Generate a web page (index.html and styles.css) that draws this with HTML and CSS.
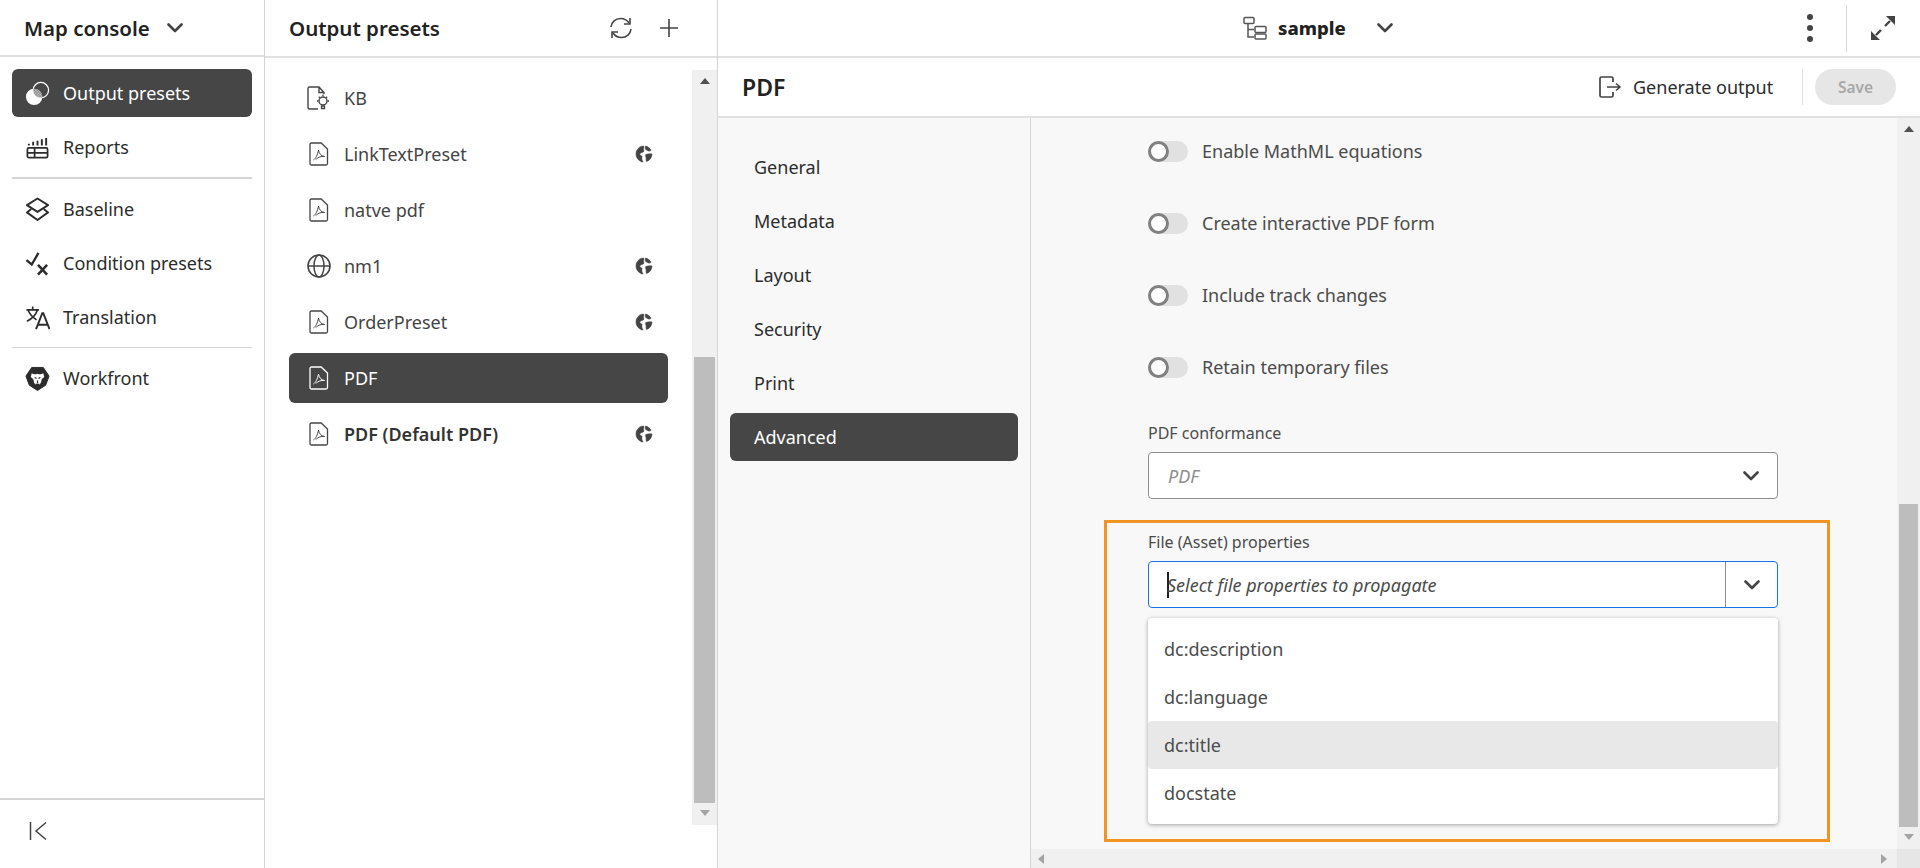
FILE: index.html
```html
<!DOCTYPE html>
<html lang="en">
<head>
  <meta charset="UTF-8" />
  <title>Map console - Output presets</title>
  <link rel="stylesheet" href="styles.css">
</head>
<body>
  <svg class="sprites" width="0" height="0">
    <defs>
      <pattern id="dither" width="3" height="3" patternUnits="userSpaceOnUse">
        <rect width="1.500" height="1.500" fill="#464646"/>
        <rect x="1.500" y="1.500" width="1.500" height="1.500" fill="#464646"/>
      </pattern>
      <clipPath id="ring-clip"><circle cx="16.500" cy="9.500" r="8"/></clipPath>
    </defs>
    <symbol id="i-pdf" viewBox="0 0 24 24">
      <path d="M4.500 1h9.700L20.500 7V21.500a1.500 1.500 0 0 1-1.500 1.500H4.500A1.500 1.500 0 0 1 3 21.500V2.500A1.500 1.500 0 0 1 4.500 1z" fill="none" stroke="currentColor" stroke-width="1.300"/>
      <path d="M6.500 18c2-1.500 4-4.500 5-10 .5 3.500 2.500 6 6 6.500-3.300-.4-7 .7-8.500 3" fill="none" stroke="currentColor" stroke-width="1"/>
    </symbol>
    <symbol id="i-world" viewBox="0 0 18 18">
      <path d="M8.500 1C4.200 1.300 1 4.800 1 9c0 3 1.600 5.600 4 7 1.200.7 2 1 3 1-1-2-1.500-3.500-1-5 .2-1-1-1.500-2-2-.6-1 .2-2 1.500-2.300 1.800-.3 2.800-1.300 2.300-2.700-.3-1-.6-1.500.3-3z" fill="currentColor" stroke="currentColor" stroke-width=".6"/>
      <path d="M10.500 1.100c2.500.5 4.500 2 5.600 4.200-1 .8-2.200 1-3.200.4-1.200-.8-2.400-1-2.700-2.200-.1-.8.5-1.500.3-2.400z" fill="currentColor" stroke="currentColor" stroke-width=".6"/>
      <path d="M10.800 9.500c2-.7 4.300-.8 6.200-.5 0 3.500-2.300 6.500-5.500 7.600-.6-1-.4-2.300-.4-3.300 0-1.300-.9-2.400-.3-3.800z" fill="currentColor" stroke="currentColor" stroke-width=".6"/>
    </symbol>
    <symbol id="i-chev" viewBox="0 0 16 10">
      <path d="M1.500 1.500L8 8l6.500-6.500" fill="none" stroke="currentColor" stroke-width="2.600" stroke-linecap="round" stroke-linejoin="round"/>
    </symbol>
  </svg>

  <aside class="sidebar">
    <div class="side-head">
      <span class="side-title">Map console</span>
      <svg class="chev"><use href="#i-chev"/></svg>
    </div>
    <nav class="side-nav">
      <a class="side-item active">
        <svg class="side-icon" viewBox="0 0 26 26">
          <circle cx="16.500" cy="9.500" r="8" fill="none" stroke="currentColor" stroke-width="1.300"/>
          <circle cx="9.500" cy="16.500" r="8.500" fill="currentColor"/>
          <circle cx="9.500" cy="16.500" r="8.500" fill="url(#dither)" clip-path="url(#ring-clip)"/>
        </svg>
        Output presets
      </a>
      <a class="side-item">
        <svg class="side-icon" viewBox="0 0 26 26">
          <path d="M4 9v2M8.500 7v4M13 6v5M17.500 4.500V11M22 3v8" fill="none" stroke="currentColor" stroke-width="2"/>
          <rect x="2.500" y="13.500" width="21" height="10" rx="1.500" fill="none" stroke="currentColor" stroke-width="1.800"/>
          <path d="M2.500 18.500h21M10 13.500v10" fill="none" stroke="currentColor" stroke-width="1.800"/>
        </svg>
        Reports
      </a>
      <hr class="side-rule">
      <a class="side-item">
        <svg class="side-icon" viewBox="0 0 26 26">
          <path d="M13 1.500L24 8.500 13 15.500 2 8.500z" fill="none" stroke="currentColor" stroke-width="2" stroke-linejoin="round"/>
          <path d="M6.500 12.500L2 16 13 24 24 16l-4.500-3.500" fill="none" stroke="currentColor" stroke-width="2" stroke-linejoin="round"/>
        </svg>
        Baseline
      </a>
      <a class="side-item">
        <svg class="side-icon" viewBox="0 0 26 26">
          <path d="M1.500 9.500L7 14 14 2" fill="none" stroke="currentColor" stroke-width="2.400"/>
          <path d="M13.500 14.500l9.500 10M23 14.500l-9.500 10" fill="none" stroke="currentColor" stroke-width="2.600"/>
        </svg>
        Condition presets
      </a>
      <a class="side-item">
        <svg class="side-icon" viewBox="0 0 26 26">
          <path d="M1.500 5h13M8 1.500V5M3 5c2 5 5 8 9 10.500M13 5c-1.500 5-5 9-11 12" fill="none" stroke="currentColor" stroke-width="1.700"/>
          <path d="M11.500 25L18 8.500h1L25.500 25M14 20.500h9" fill="none" stroke="currentColor" stroke-width="2"/>
        </svg>
        Translation
      </a>
      <hr class="side-rule thin">
      <a class="side-item">
        <svg class="side-icon" viewBox="0 0 26 26">
          <path d="M7 1.500h12l6 9-3.500 9.500L13 25.500 4.500 20 1 10.500z" fill="currentColor" stroke="currentColor" stroke-linejoin="round"/>
          <path d="M7 7.500c2 1.500 4 1.500 6 .5 2 1 4 1 6-.5l1 4-2.500 2-1 4-1.500 2h-4l-1.500-2-1-4L6 11.500z" fill="#fff"/>
          <path d="M10 12l2 .8M16 12l-2 .8M13 15v3M11 19h4" stroke="currentColor" stroke-width="1.300" fill="none"/>
        </svg>
        Workfront
      </a>
    </nav>
    <div class="side-foot">
      <svg class="collapse" viewBox="0 0 18 20"><path d="M1.500 1v18M17 1.500L7 10l10 8.500" fill="none" stroke="currentColor" stroke-width="1.500"/></svg>
    </div>
  </aside>

  <section class="presets">
    <div class="presets-head">
      <span class="presets-title">Output presets</span>
      <div class="head-tools">
        <svg class="tool" viewBox="0 0 24 22">
          <path d="M2 10C2.500 5 6.500 1.500 11.500 1.500c3.500 0 6.500 1.500 8.500 4.500M22 12c-.5 5-4.500 8.500-9.500 8.500-3.500 0-6.500-1.500-8.500-4.500" fill="none" stroke="currentColor" stroke-width="1.600"/>
          <path d="M21 1v6h-6M3 21v-6h6" fill="none" stroke="currentColor" stroke-width="1.600"/>
        </svg>
        <svg class="tool plus" viewBox="0 0 20 20"><path d="M10 1v18M1 10h18" fill="none" stroke="currentColor" stroke-width="1.600"/></svg>
      </div>
    </div>
    <div class="presets-body">
      <ul class="preset-list">
        <li class="preset">
          <svg class="preset-icon" viewBox="0 0 24 24">
            <path d="M11 23H2.500A1.500 1.500 0 0 1 1 21.500V2.500A1.500 1.500 0 0 1 2.500 1H12l5 5.500V8M12 1v5.500h5" fill="none" stroke="currentColor" stroke-width="1.400"/>
            <circle cx="16" cy="15" r="4" fill="none" stroke="currentColor" stroke-width="1.400"/>
            <path d="M14.500 20h3v2.500h-3zM16 8.500v1.500M10 15h1.500M20.500 15H22M11.800 10.800l1 1M20.200 10.800l-1 1" fill="none" stroke="currentColor" stroke-width="1.300"/>
          </svg>
          <span class="preset-name">KB</span>
        </li>
        <li class="preset">
          <svg class="preset-icon"><use href="#i-pdf"/></svg>
          <span class="preset-name">LinkTextPreset</span>
          <svg class="world"><use href="#i-world"/></svg>
        </li>
        <li class="preset">
          <svg class="preset-icon"><use href="#i-pdf"/></svg>
          <span class="preset-name">natve pdf</span>
        </li>
        <li class="preset">
          <svg class="preset-icon" viewBox="0 0 24 24">
            <circle cx="12" cy="12" r="11" fill="none" stroke="currentColor" stroke-width="1.600"/>
            <ellipse cx="12" cy="12" rx="5" ry="11" fill="none" stroke="currentColor" stroke-width="1.500"/>
            <path d="M1 12h22" stroke="currentColor" stroke-width="1.500"/>
          </svg>
          <span class="preset-name">nm1</span>
          <svg class="world"><use href="#i-world"/></svg>
        </li>
        <li class="preset">
          <svg class="preset-icon"><use href="#i-pdf"/></svg>
          <span class="preset-name">OrderPreset</span>
          <svg class="world"><use href="#i-world"/></svg>
        </li>
        <li class="preset active">
          <svg class="preset-icon"><use href="#i-pdf"/></svg>
          <span class="preset-name">PDF</span>
        </li>
        <li class="preset">
          <svg class="preset-icon"><use href="#i-pdf"/></svg>
          <span class="preset-name strong">PDF (Default PDF)</span>
          <svg class="world"><use href="#i-world"/></svg>
        </li>
      </ul>
      <div class="vscroll list-scroll">
        <span class="arrow up"></span>
        <span class="track"><span class="thumb list-thumb"></span></span>
        <span class="arrow down"></span>
      </div>
    </div>
  </section>

  <main class="editor">
    <div class="top-bar">
      <div class="map-name">
        <svg class="map-icon" viewBox="0 0 24 24">
          <path d="M5 8v13h6M5 13.500h6" fill="none" stroke="currentColor" stroke-width="1.500"/>
          <rect x="1" y="1.500" width="10" height="6" rx="1" fill="none" stroke="currentColor" stroke-width="1.500"/>
          <rect x="12" y="10.500" width="11" height="6" rx="1" fill="none" stroke="currentColor" stroke-width="1.500"/>
          <rect x="12" y="18" width="11" height="5" rx="1" fill="none" stroke="currentColor" stroke-width="1.500"/>
        </svg>
        <strong>sample</strong>
        <svg class="chev"><use href="#i-chev"/></svg>
      </div>
      <div class="top-tools">
        <span class="kebab"><i></i><i></i><i></i></span>
        <span class="top-rule"></span>
        <svg class="expand" viewBox="0 0 26 26">
          <path d="M16 1h9v9zM10 25H1v-9z" fill="currentColor"/>
          <path d="M20 6l-5 5M6 20l5-5" fill="none" stroke="currentColor" stroke-width="2.400"/>
        </svg>
      </div>
    </div>

    <div class="title-bar">
      <h1>PDF</h1>
      <div class="title-actions">
        <svg class="gen-icon" viewBox="0 0 24 24">
          <path d="M15 7V3.500A1.500 1.500 0 0 0 13.500 2h-10A1.500 1.500 0 0 0 2 3.500v17A1.500 1.500 0 0 0 3.500 22h10a1.500 1.500 0 0 0 1.500-1.500V17" fill="none" stroke="currentColor" stroke-width="1.700"/>
          <path d="M9 12h13M18 8.500l4 3.500-4 3.500" fill="none" stroke="currentColor" stroke-width="1.500"/>
        </svg>
        <span class="gen-label">Generate output</span>
        <span class="title-rule"></span>
        <button class="save" disabled>Save</button>
      </div>
    </div>

    <div class="editor-body">
      <ul class="tabs">
        <li class="tab">General</li>
        <li class="tab">Metadata</li>
        <li class="tab">Layout</li>
        <li class="tab">Security</li>
        <li class="tab">Print</li>
        <li class="tab active">Advanced</li>
      </ul>

      <div class="pane">
        <div class="pane-row">
          <div class="form">
            <label class="toggle"><span class="switch"></span>Enable MathML equations</label>
            <label class="toggle"><span class="switch"></span>Create interactive PDF form</label>
            <label class="toggle"><span class="switch"></span>Include track changes</label>
            <label class="toggle"><span class="switch"></span>Retain temporary files</label>

            <div class="field">
              <div class="field-label">PDF conformance</div>
              <div class="select">
                <span class="placeholder">PDF</span>
                <svg class="chev"><use href="#i-chev"/></svg>
              </div>
            </div>

            <div class="callout">
              <div class="field-label">File (Asset) properties</div>
              <div class="combo">
                <div class="combo-input"><span class="caret"></span><span class="combo-text">Select file properties to propagate</span></div>
                <div class="combo-btn"><svg class="chev"><use href="#i-chev"/></svg></div>
              </div>
              <ul class="options">
                <li class="option">dc:description</li>
                <li class="option">dc:language</li>
                <li class="option hover">dc:title</li>
                <li class="option">docstate</li>
              </ul>
            </div>
          </div>
          <div class="vscroll pane-scroll">
            <span class="arrow up"></span>
            <span class="track"><span class="thumb pane-thumb"></span></span>
            <span class="arrow down"></span>
          </div>
        </div>
        <div class="hscroll">
          <span class="arrow left"></span>
          <span class="arrow right"></span>
          <span class="corner"></span>
        </div>
      </div>
    </div>
  </main>
</body>
</html>
```

FILE: styles.css
```css
*, *::before {
  box-sizing: border-box;
}

html, body {
  height: 100%;
}

body {
  margin: 0;
  display: flex;
  overflow: hidden;
  font-family: "Noto Sans", Lato, sans-serif;
  font-size: 18px;
  color: #2c2c2c;
  background-color: #fff;
}

ul {
  list-style: none;
  margin: 0;
  padding: 0;
}

.sprites {
  position: absolute;
}

.chev {
  width: 16px;
  height: 10px;
  color: #444;
}

/* left nav */
.sidebar {
  width: 265px;
  flex: none;
  display: flex;
  flex-direction: column;
  border-right: 1px solid #d5d5d5;
}

.side-head {
  height: 57px;
  flex: none;
  display: flex;
  align-items: center;
  gap: 17px;
  padding-left: 24px;
  border-bottom: 2px solid #e1e1e1;
}

.side-title {
  font-size: 20.5px;
  font-weight: 600;
  color: #222;
}

.side-nav {
  flex: 1;
  display: flex;
  flex-direction: column;
  gap: 6px;
  padding: 12px 12px 0;
}

.side-item {
  height: 48px;
  display: flex;
  align-items: center;
  gap: 13px;
  padding-left: 13px;
  border-radius: 6px;
  color: #2c2c2c;
}

.side-item.active {
  background-color: #464646;
  color: #fff;
}

.side-icon {
  width: 25px;
  height: 25px;
  flex: none;
}

.side-rule {
  width: 100%;
  height: 2px;
  margin: 0;
  border: none;
  background-color: #d5d5d5;
}

.side-rule.thin {
  height: 1px;
}

.side-foot {
  height: 70px;
  flex: none;
  padding: 21px 0 0 29px;
  border-top: 2px solid #d5d5d5;
}

.collapse {
  width: 18px;
  height: 20px;
  color: #444;
}

/* preset list */
.presets {
  width: 453px;
  flex: none;
  display: flex;
  flex-direction: column;
  border-right: 1px solid #d5d5d5;
}

.presets-head {
  height: 58px;
  flex: none;
  display: flex;
  align-items: center;
  justify-content: space-between;
  padding: 0 38px 0 24px;
  border-bottom: 2px solid #e1e1e1;
}

.presets-title {
  font-size: 20.5px;
  font-weight: 600;
  color: #222;
}

.head-tools {
  display: flex;
  align-items: center;
  gap: 26px;
  color: #444;
}

.tool {
  width: 24px;
  height: 22px;
}

.tool.plus {
  width: 20px;
  height: 20px;
}

.presets-body {
  flex: 1;
  display: flex;
  padding-top: 12px;
}

.preset-list {
  flex: 1;
  display: flex;
  flex-direction: column;
  gap: 6px;
  padding: 3px 24px 0;
}

.preset {
  height: 50px;
  display: flex;
  align-items: center;
  gap: 13px;
  padding: 0 15px 0 18px;
  border-radius: 6px;
  color: #444;
}

.preset.active {
  background-color: #464646;
  color: #fff;
}

.preset-icon {
  width: 24px;
  height: 24px;
  flex: none;
}

.preset-name {
  flex: 1;
}

.preset-name.strong {
  font-weight: 600;
  color: #333;
}

.world {
  width: 18px;
  height: 18px;
  flex: none;
  color: #444;
}

/* scrollbars */
.vscroll {
  width: 25px;
  flex: none;
  display: flex;
  flex-direction: column;
  align-items: center;
  background-color: #f0f0f0;
}

.list-scroll {
  height: 755px;
}

.track {
  flex: 1;
  width: 100%;
  padding: 0 2px;
  display: flex;
  flex-direction: column;
  justify-content: flex-end;
}

.thumb {
  display: block;
  background-color: #bdbdbd;
}

.list-thumb {
  height: 446px;
}

.pane-thumb {
  height: 323px;
}

.arrow {
  width: 0;
  height: 0;
  flex: none;
  border: 5px solid transparent;
}

.arrow.up {
  margin: 8px 0 5px;
  border-top: none;
  border-bottom: 6px solid #505050;
}

.arrow.down {
  margin: 7px 0 9px;
  border-bottom: none;
  border-top: 6px solid #a3a3a3;
}

.arrow.left {
  border-left: none;
  border-right: 6px solid #a3a3a3;
}

.arrow.right {
  border-right: none;
  border-left: 6px solid #a3a3a3;
}

/* right side */
.editor {
  flex: 1;
  min-width: 0;
  display: flex;
  flex-direction: column;
}

.top-bar {
  height: 58px;
  flex: none;
  display: flex;
  align-items: center;
  justify-content: flex-end;
  position: relative;
  border-bottom: 2px solid #e1e1e1;
}

.map-name {
  position: absolute;
  left: 525px;
  top: 15px;
  display: flex;
  align-items: center;
}

.map-icon {
  width: 24px;
  height: 24px;
  color: #555;
  margin-right: 11px;
}

.map-name strong {
  width: 99px;
  font-size: 18.5px;
  font-weight: 800;
  color: #222;
}

.top-tools {
  display: flex;
  align-items: center;
  padding-right: 24px;
}

.kebab {
  display: flex;
  flex-direction: column;
  gap: 5px;
}

.kebab i {
  width: 6px;
  height: 6px;
  border-radius: 50%;
  background-color: #444;
}

.top-rule {
  width: 1px;
  height: 47px;
  margin: 0 23px 0 33px;
  background-color: #d5d5d5;
}

.expand {
  width: 26px;
  height: 26px;
  color: #444;
}

.title-bar {
  height: 60px;
  flex: none;
  display: flex;
  align-items: center;
  justify-content: space-between;
  padding: 0 24px;
  border-bottom: 2px solid #e1e1e1;
}

.title-bar h1 {
  margin: 0;
  font-size: 23px;
  font-weight: 600;
  color: #222;
}

.title-actions {
  display: flex;
  align-items: center;
}

.gen-icon {
  width: 24px;
  height: 24px;
  color: #444;
  margin-right: 11px;
}

.gen-label {
  width: 169px;
}

.title-rule {
  width: 1px;
  height: 36px;
  margin-right: 12px;
  background-color: #e1e1e1;
}

.save {
  width: 81px;
  height: 36px;
  border: none;
  border-radius: 18px;
  background-color: #e6e6e6;
  color: #a8a8a8;
  font: 600 15.5px "Noto Sans", sans-serif;
}

.editor-body {
  flex: 1;
  min-height: 0;
  display: flex;
}

.tabs {
  width: 313px;
  flex: none;
  display: flex;
  flex-direction: column;
  gap: 6px;
  padding: 25px 12px 0;
  background-color: #f8f8f8;
  border-right: 1px solid #d5d5d5;
}

.tab {
  height: 48px;
  flex: none;
  display: flex;
  align-items: center;
  padding-left: 24px;
  border-radius: 6px;
}

.tab.active {
  background-color: #464646;
  color: #fff;
}

.pane {
  flex: 1;
  min-width: 0;
  display: flex;
  flex-direction: column;
  background-color: #f8f8f8;
}

.pane-row {
  flex: 1;
  min-height: 0;
  display: flex;
}

.form {
  flex: 1;
  min-width: 0;
  margin-top: -3px;
  padding: 0 67px 0 73px;
}

.toggle {
  height: 72px;
  display: flex;
  align-items: center;
  gap: 14px;
  padding-left: 44px;
  color: #4b4b4b;
}

.switch {
  width: 40px;
  height: 21px;
  position: relative;
  border-radius: 11px;
  background-color: #e1e1e1;
}

.switch::before {
  content: "";
  position: absolute;
  left: 0;
  top: 0;
  width: 21px;
  height: 21px;
  border: 3px solid #808080;
  border-radius: 50%;
  background-color: #fff;
}

.field {
  margin: 19px 52px 0 44px;
}

.field-label {
  font-size: 16px;
  height: 30px;
  color: #4b4b4b;
}

.select {
  height: 47px;
  display: flex;
  align-items: center;
  justify-content: space-between;
  padding: 0 18px 0 19px;
  border: 1px solid #8e8e8e;
  border-radius: 4px;
  background-color: #fff;
}

.placeholder {
  font-style: italic;
  color: #8e8e8e;
}

.callout {
  margin-top: 21px;
  height: 322px;
  padding: 8px 49px 0 41px;
  border: 3px solid #f29423;
}

.combo {
  height: 47px;
  display: flex;
  border: 1px solid #1473e6;
  border-radius: 4px;
  background-color: #fff;
}

.combo-input {
  flex: 1;
  display: flex;
  align-items: center;
  padding-left: 18px;
}

.caret {
  width: 2px;
  height: 26px;
  margin-right: -2px;
  background-color: #222;
}

.combo-text {
  font-style: italic;
  color: #4b4b4b;
}

.combo-btn {
  width: 52px;
  flex: none;
  display: flex;
  align-items: center;
  justify-content: center;
  border-left: 1px solid #8e8e8e;
}

.options {
  height: 206px;
  margin-top: 10px;
  padding-top: 7px;
  border-radius: 4px;
  background-color: #fff;
  box-shadow: 0 1px 4px rgba(0, 0, 0, 0.35);
}

.option {
  height: 48px;
  display: flex;
  align-items: center;
  padding-left: 16px;
  border-radius: 4px;
  color: #4b4b4b;
}

.option.hover {
  background-color: #e8e8e8;
}

.pane-scroll {
  width: 23px;
}

.hscroll {
  height: 19px;
  flex: none;
  display: flex;
  align-items: center;
  padding-left: 7px;
  background-color: #f0f0f0;
}

.corner {
  width: 23px;
  height: 19px;
  background-color: #e6e6e6;
}

.hscroll .arrow.right {
  margin-left: auto;
  margin-right: 10px;
}
```
